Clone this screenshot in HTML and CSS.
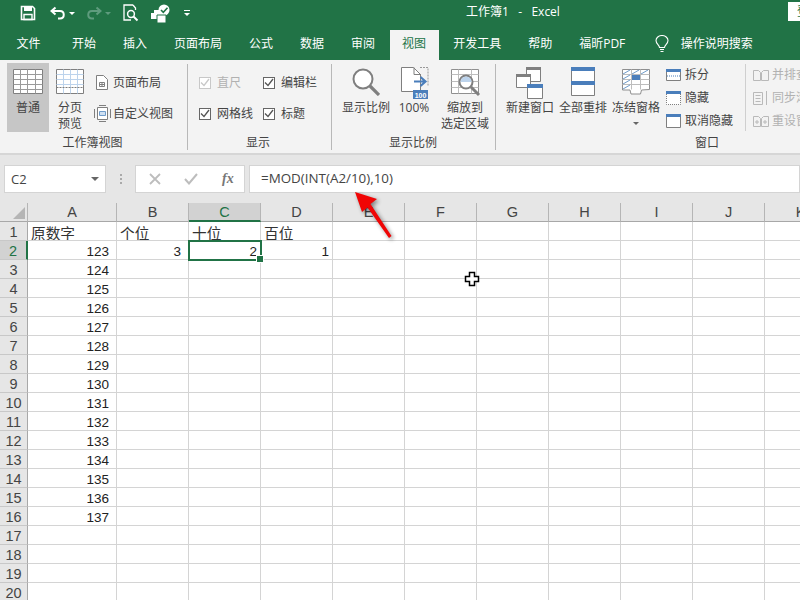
FILE: index.html
```html
<!DOCTYPE html>
<html lang="zh-CN">
<head>
    <meta charset="UTF-8">
    <title>工作簿1 - Excel</title>
    <link rel="stylesheet" href="styles.css">
</head>
<body>

    <header class="titlebar">
        <div class="qat">
            <svg class="qat-save" width="16" height="16" viewBox="0 0 16 16"><path d="M1.5 1.5h11l2 2v11h-13z" fill="none" stroke="#fff" stroke-width="1.6"/><path d="M4 1.5h8v4.5H4z" fill="#fff"/><path d="M4 9.5h8v5H4z" fill="none" stroke="#fff" stroke-width="1.4"/></svg>
            <svg class="qat-undo" width="16" height="14" viewBox="0 0 16 14"><path d="M5.5 1.5 1.5 5l4 3.5" fill="none" stroke="#fff" stroke-width="2"/><path d="M2 5h8c5 0 5 7.500 0 7.500H8" fill="none" stroke="#fff" stroke-width="2"/></svg>
            <span class="caret caret-white"></span>
            <svg class="qat-redo" width="16" height="14" viewBox="0 0 16 14"><path d="M10.500 1.500l4 3.500-4 3.500" fill="none" stroke="#5f9c7e" stroke-width="2"/><path d="M14 5H6c-5 0-5 7.500 0 7.500h2" fill="none" stroke="#5f9c7e" stroke-width="2"/></svg>
            <span class="caret caret-dim"></span>
            <svg class="qat-preview" width="16" height="18" viewBox="0 0 16 18"><path d="M10 1H1v15h7" fill="none" stroke="#fff" stroke-width="1.300"/><path d="M10 1l2.500 3v2" fill="none" stroke="#fff" stroke-width="1.300"/><circle cx="8" cy="10" r="3.400" fill="none" stroke="#fff" stroke-width="1.500"/><path d="M10.500 12.500l4 4" stroke="#fff" stroke-width="2"/></svg>
            <svg class="qat-check" width="22" height="19" viewBox="0 0 22 19"><circle cx="13" cy="6" r="5.500" fill="#fff"/><path d="M10 6l2.300 2.300L16.500 3.800" fill="none" stroke="#217346" stroke-width="1.600"/><path d="M0 9h11v6H0z" fill="#fff"/><path d="M3 6h6v3H3z" fill="#fff"/><path d="M6 11h9v8H6z" fill="#fff" stroke="#217346"/></svg>
            <span class="qat-more"><i class="caret caret-white"></i></span>
        </div>
        <div class="doc-title">工作簿1&nbsp;&nbsp; -&nbsp;&nbsp; Excel</div>
        <div class="login">登录</div>
    </header>

    <nav class="tabs">
        <span class="tab tab-first">文件</span>
        <span class="tab">开始</span>
        <span class="tab">插入</span>
        <span class="tab">页面布局</span>
        <span class="tab">公式</span>
        <span class="tab">数据</span>
        <span class="tab">审阅</span>
        <span class="tab tab-active">视图</span>
        <span class="tab">开发工具</span>
        <span class="tab">帮助</span>
        <span class="tab">福昕PDF</span>
        <span class="tab tab-search">
            <svg width="14" height="18" viewBox="0 0 14 18"><path d="M4.500 12.500C4.500 10 1 9 1 5.500a6 5 0 0 1 12 0C13 9 9.500 10 9.500 12.500z" fill="none" stroke="#fff" stroke-width="1.100"/><path d="M5 14.500h4M5.500 16.500h3" stroke="#fff" stroke-width="1.100"/></svg>
            操作说明搜索
        </span>
    </nav>

    <section class="ribbon">
        <div class="group group-views">
            <div class="group-body">
                <div class="big big-normal">
                    <div class="big-icon">
                        <svg width="30" height="25" viewBox="0 0 30 25"><path d="M.5.500h29v24H.500z" fill="#fff" stroke="#7f7f7f"/><path d="M.5 5.500h29M.5 10.500h29M.5 15.500h29M.5 20.500h29M7.500.500v24M14.500.500v24M22.500.500v24" stroke="#9a9a9a" fill="none"/></svg>
                    </div>
                    <span>普通</span>
                </div>
                <div class="big big-page">
                    <div class="big-icon">
                        <svg width="28" height="25" viewBox="0 0 28 25"><path d="M.5.500h27v24H.500z" fill="#fff" stroke="#7f7f7f"/><path d="M.5 5.500h27M.5 10.500h27M.5 15.500h27M7.500.500v24M14.500.500v24M21.500.500v24" stroke="#bcd3ec" fill="none"/><path d="M.5 18.500h27" stroke="#7f7f7f" stroke-dasharray="2 1"/></svg>
                    </div>
                    <span>分页<br>预览</span>
                </div>
                <div class="small-col small-col-2">
                    <div class="small">
                        <svg class="ico-layout" width="12" height="15" viewBox="0 0 12 15"><path d="M.5.500h7l4 4v10H.500z" fill="#fff" stroke="#7f7f7f"/><path d="M3.500 7.500h5v4h-5zM6 7.500v4M3.500 9.500h5" fill="none" stroke="#7f7f7f"/></svg>
                        页面布局
                    </div>
                    <div class="small">
                        <svg class="ico-custom" width="17" height="17" viewBox="0 0 17 17"><path d="M3.500 2.500h10v12h-10z" fill="#fff" stroke="#7f7f7f"/><path d="M5.500 6.500h6v4h-6z" fill="#cfe0f2" stroke="#6f9bc9"/><path d="M.5 4v9M16.500 4v9M5 .5h7M5 16.500h7" stroke="#7f7f7f"/></svg>
                        自定义视图
                    </div>
                </div>
            </div>
            <div class="group-label label-views">工作簿视图</div>
        </div>

        <div class="group group-show">
            <div class="group-body">
                <div class="checks">
                    <label class="check check-off"><i class="box"><svg width="10" height="9" viewBox="0 0 10 9"><path d="M1 4.500l3 3L9 1" fill="none" stroke="#c8c8c8" stroke-width="1.300"/></svg></i>直尺</label>
                    <label class="check"><i class="box"><svg width="10" height="9" viewBox="0 0 10 9"><path d="M1 4.500l3 3L9 1" fill="none" stroke="#555" stroke-width="1.300"/></svg></i>编辑栏</label>
                    <label class="check"><i class="box"><svg width="10" height="9" viewBox="0 0 10 9"><path d="M1 4.500l3 3L9 1" fill="none" stroke="#555" stroke-width="1.300"/></svg></i>网格线</label>
                    <label class="check"><i class="box"><svg width="10" height="9" viewBox="0 0 10 9"><path d="M1 4.500l3 3L9 1" fill="none" stroke="#555" stroke-width="1.300"/></svg></i>标题</label>
                </div>
            </div>
            <div class="group-label">显示</div>
        </div>

        <div class="group group-zoom">
            <div class="group-body">
                <div class="big big-zoom">
                    <div class="big-icon">
                        <svg width="28" height="28" viewBox="0 0 28 28"><circle cx="11" cy="11" r="9.500" fill="#fff" stroke="#7f7f7f" stroke-width="2"/><path d="M18 18l9 9" stroke="#7f7f7f" stroke-width="3.200"/></svg>
                    </div>
                    <span>显示比例</span>
                </div>
                <div class="big big-100">
                    <div class="big-icon">
                        <svg width="28" height="32" viewBox="0 0 28 32"><path d="M.5.500h12l7 7v17H.500z" fill="#fff" stroke="#7f7f7f"/><path d="M13 .5v7h7" fill="none" stroke="#7f7f7f"/><path d="M19 .5h8v19" fill="none" stroke="#999" stroke-dasharray="2 1"/><path d="M13 14.500h11M19.500 10l5 4.500-5 4.500" fill="none" stroke="#4a7ebb" stroke-width="2.200"/><rect x="12" y="23" width="15" height="9" fill="#4a7ebb"/><text x="19.500" y="30.500" class="ico-text">100</text></svg>
                    </div>
                    <span>100%</span>
                </div>
                <div class="big big-fit">
                    <div class="big-icon">
                        <svg width="31" height="29" viewBox="0 0 31 29"><path d="M.5.500h27v24H.500z" fill="#fff" stroke="#8f8f8f"/><path d="M.5 5.500h27M.5 12.500h27M.5 18.500h27M7.500.5v24M20.500.5v24" stroke="#bdbdbd" fill="none"/><circle cx="15" cy="13" r="6.500" fill="#fff" stroke="#7f7f7f" stroke-width="2"/><path d="M9.500 13a5.500 5.500 0 0 1 11 0z" fill="#bcd3ec"/><path d="M20 18l8 8" stroke="#7f7f7f" stroke-width="3"/></svg>
                    </div>
                    <span>缩放到<br>选定区域</span>
                </div>
            </div>
            <div class="group-label label-zoom">显示比例</div>
        </div>

        <div class="group group-window">
            <div class="group-body">
                <div class="big big-new">
                    <div class="big-icon">
                        <svg width="28" height="32" viewBox="0 0 28 32"><path d="M10.500.500h14v14h-14z" fill="#fff" stroke="#7f7f7f"/><path d="M10 0h15v3H10z" fill="#7f7f7f"/><path d="M.5 7.500h14v13H.500z" fill="#fff" stroke="#7f7f7f"/><path d="M0 7h15v3H0z" fill="#7f7f7f"/><path d="M11.500 17.500h15v14h-15z" fill="#fff" stroke="#7f7f7f"/><path d="M11 17h16v4H11z" fill="#4a7ebb"/></svg>
                    </div>
                    <span>新建窗口</span>
                </div>
                <div class="big big-all">
                    <div class="big-icon">
                        <svg width="24" height="29" viewBox="0 0 24 29"><path d="M.5.500h23v28H.500z" fill="#fff" stroke="#7f7f7f"/><path d="M0 0h24v4H0zM0 14h24v4H0z" fill="#4a7ebb"/></svg>
                    </div>
                    <span>全部重排</span>
                </div>
                <div class="big big-freeze">
                    <div class="big-icon">
                        <svg width="28" height="26" viewBox="0 0 28 26"><path d="M.5.500h27v20l-8 .5-1 4H9l-1-4H.5z" fill="#fff" stroke="#8f8f8f"/><path d="M.5 5.500h27M.5 10.500h27M.5 15.500h27M9.500.5v20M18.500.5v20" stroke="#bdbdbd" fill="none"/><path d="M1 5l7-4M1 10l7-4M1 15l7-4M1 20l7-4M10 5l7-4M19 5l7-4" stroke="#6f9bc9"/><path d="M10 6h8v5h-8z" fill="#4a7ebb"/></svg>
                    </div>
                    <span>冻结窗格</span>
                    <i class="caret caret-gray"></i>
                </div>
                <div class="small-col small-col-3">
                    <div class="small">
                        <svg width="15" height="12" viewBox="0 0 15 12"><path d="M.5.500h14v11H.500z" fill="#fff" stroke="#7f7f7f"/><path d="M0 0h15v3H0z" fill="#4a7ebb"/><path d="M1 7h13" stroke="#4a7ebb" stroke-dasharray="1 1"/></svg>
                        拆分
                    </div>
                    <div class="small">
                        <svg width="15" height="14" viewBox="0 0 15 14"><path d="M0 0h15v3H0z" fill="#4a7ebb"/><path d="M.5 3v10.500h14V3" fill="#fff" stroke="#7f7f7f" stroke-dasharray="1 1"/></svg>
                        隐藏
                    </div>
                    <div class="small">
                        <svg width="15" height="14" viewBox="0 0 15 14"><path d="M.5.500h14v13H.500z" fill="#fff" stroke="#7f7f7f"/><path d="M0 0h15v3H0z" fill="#4a7ebb"/></svg>
                        取消隐藏
                    </div>
                </div>
                <div class="small-col small-col-off">
                    <div class="small small-off">
                        <svg width="16" height="12" viewBox="0 0 16 12"><path d="M.5 1.500h5l2 2v8h-7zM15.500 1.500h-5l-2 2v8h7z" fill="none" stroke="#b9b9b9"/></svg>
                        并排查看
                    </div>
                    <div class="small small-off">
                        <svg width="16" height="16" viewBox="0 0 16 16"><path d="M.5 2.500h9v12h-9zM2.500 5.500h5M2.500 8.500h5M2.500 11.500h5M13.500 1v14" fill="none" stroke="#b9b9b9"/></svg>
                        同步滚动
                    </div>
                    <div class="small small-off">
                        <svg width="16" height="12" viewBox="0 0 16 12"><path d="M.5 1.500h5l2 2v8h-7zM15.500 1.500h-5l-2 2v8h7zM2 7h4M4 5v4M10 7h4M12 5v4" fill="none" stroke="#b9b9b9"/></svg>
                        重设窗口位置
                    </div>
                </div>
            </div>
            <div class="group-label">窗口</div>
        </div>
    </section>

    <section class="formula-area">
        <div class="namebox">C2<i class="caret caret-gray"></i></div>
        <div class="grip"></div>
        <div class="fx-buttons">
            <svg width="12" height="12" viewBox="0 0 12 12"><path d="M1 1l10 10M11 1 1 11" stroke="#bdbdbd" stroke-width="1.800"/></svg>
            <svg width="14" height="12" viewBox="0 0 14 12"><path d="M1 6l4 4.500L13 1" fill="none" stroke="#bdbdbd" stroke-width="2"/></svg>
            <span class="fx">fx</span>
        </div>
        <div class="formula-input">=MOD(INT(A2/10),10)</div>
    </section>

    <main class="sheet">
        <table class="cells">
            <thead>
                <tr><th class="corner"><i></i></th><th class="col-a">A</th><th>B</th><th class="on">C</th><th>D</th><th>E</th><th>F</th><th>G</th><th>H</th><th>I</th><th>J</th><th>K</th></tr>
            </thead>
            <tbody>
                <tr><th>1</th><td class="txt">原数字</td><td class="txt">个位</td><td class="txt">十位</td><td class="txt">百位</td><td></td><td></td><td></td><td></td><td></td><td></td><td></td></tr>
                <tr><th class="on-row">2</th><td class="num">123</td><td class="num">3</td><td class="num num-tight selected">2<i class="handle"></i></td><td class="num num-tight">1</td><td></td><td></td><td></td><td></td><td></td><td></td><td></td></tr>
                <tr><th>3</th><td class="num">124</td><td></td><td></td><td></td><td></td><td></td><td></td><td></td><td></td><td></td><td></td></tr>
                <tr><th>4</th><td class="num">125</td><td></td><td></td><td></td><td></td><td></td><td></td><td></td><td></td><td></td><td></td></tr>
                <tr><th>5</th><td class="num">126</td><td></td><td></td><td></td><td></td><td></td><td></td><td></td><td></td><td></td><td></td></tr>
                <tr><th>6</th><td class="num">127</td><td></td><td></td><td></td><td></td><td></td><td></td><td></td><td></td><td></td><td></td></tr>
                <tr><th>7</th><td class="num">128</td><td></td><td></td><td></td><td></td><td></td><td></td><td></td><td></td><td></td><td></td></tr>
                <tr><th>8</th><td class="num">129</td><td></td><td></td><td></td><td></td><td></td><td></td><td></td><td></td><td></td><td></td></tr>
                <tr><th>9</th><td class="num">130</td><td></td><td></td><td></td><td></td><td></td><td></td><td></td><td></td><td></td><td></td></tr>
                <tr><th>10</th><td class="num">131</td><td></td><td></td><td></td><td></td><td></td><td></td><td></td><td></td><td></td><td></td></tr>
                <tr><th>11</th><td class="num">132</td><td></td><td></td><td></td><td></td><td></td><td></td><td></td><td></td><td></td><td></td></tr>
                <tr><th>12</th><td class="num">133</td><td></td><td></td><td></td><td></td><td></td><td></td><td></td><td></td><td></td><td></td></tr>
                <tr><th>13</th><td class="num">134</td><td></td><td></td><td></td><td></td><td></td><td></td><td></td><td></td><td></td><td></td></tr>
                <tr><th>14</th><td class="num">135</td><td></td><td></td><td></td><td></td><td></td><td></td><td></td><td></td><td></td><td></td></tr>
                <tr><th>15</th><td class="num">136</td><td></td><td></td><td></td><td></td><td></td><td></td><td></td><td></td><td></td><td></td></tr>
                <tr><th>16</th><td class="num">137</td><td></td><td></td><td></td><td></td><td></td><td></td><td></td><td></td><td></td><td></td></tr>
                <tr><th>17</th><td></td><td></td><td></td><td></td><td></td><td></td><td></td><td></td><td></td><td></td><td></td></tr>
                <tr><th>18</th><td></td><td></td><td></td><td></td><td></td><td></td><td></td><td></td><td></td><td></td><td></td></tr>
                <tr><th>19</th><td></td><td></td><td></td><td></td><td></td><td></td><td></td><td></td><td></td><td></td><td></td></tr>
                <tr><th>20</th><td></td><td></td><td></td><td></td><td></td><td></td><td></td><td></td><td></td><td></td><td></td></tr>
            </tbody>
        </table>
    </main>

    <!-- annotation drawn over the screenshot -->
    <svg class="arrow" width="60" height="60" viewBox="0 0 60 60">
        <defs><filter id="soft" x="-30%" y="-30%" width="160%" height="160%"><feGaussianBlur stdDeviation="2"/></filter></defs>
        <path d="M5 1 12 21l5.500-4.500L39 47l2.500-2L20.500 13 27 8z" fill="#000" opacity=".45" filter="url(#soft)" transform="translate(2 2)"/>
        <path d="M5 1 12 21l5.500-4.500L39 47l2.500-2L20.500 13 27 8z" fill="#f00505"/>
    </svg>
    <svg class="cross" width="16" height="16" viewBox="0 0 16 16"><path d="M5.500 1.500h5v4h4v5h-4v4h-5v-4h-4v-5h4z" fill="#fff" stroke="#000" stroke-width="1.500"/></svg>

</body>
</html>
```

FILE: styles.css
```css
* {
    box-sizing: border-box;
}

html, body {
    margin: 0;
    padding: 0;
    width: 800px;
    height: 600px;
    overflow: hidden;
}

body {
    position: relative;
    background: #e6e6e6;
    color: #444;
    font-family: "Open Sans", "Noto Sans CJK SC", sans-serif;
    font-size: 12px;
    line-height: 16px;
}

svg {
    display: block;
    flex: none;
}

.caret {
    display: block;
    width: 0;
    height: 0;
    border-left: 3px solid transparent;
    border-right: 3px solid transparent;
    border-top: 3px solid #fff;
}

.caret-dim {
    border-top-color: #5f9c7e;
}

.caret-gray {
    border-top-color: #666;
}

/* title bar */
.titlebar {
    height: 30px;
    background: #217346;
    color: #fff;
    display: flex;
    align-items: flex-start;
    position: relative;
}

.qat {
    display: flex;
    align-items: center;
    height: 26px;
    padding-left: 20px;
}

.qat-undo { margin-left: 14px; }
.qat-redo { margin-left: 11px; }
.qat-preview { margin-left: 12px; }
.qat-check { margin-left: 12px; }
.qat-undo + .caret { margin-left: 3px; }
.qat-redo + .caret { margin-left: 3px; }

.qat-more {
    width: 6px;
    margin-left: 11px;
    border-top: 1px solid #fff;
    padding-top: 2px;
}

.doc-title {
    margin-left: 276px;
    line-height: 23px;
    width: 280px;
    flex: none;
}

.login {
    margin-left: auto;
    margin-top: 2px;
    width: 12px;
    height: 19px;
    padding-left: 9px;
    background: #fff;
    color: #217346;
    line-height: 19px;
    white-space: nowrap;
    overflow: hidden;
}

/* tabs */
.tabs {
    height: 30px;
    background: #217346;
    color: #fff;
    display: flex;
    padding-left: 3px;
}

.tab {
    padding: 0 13.500px;
    line-height: 28px;
    white-space: nowrap;
}

.tab-first {
    padding-right: 18px;
}

.tab-active {
    background: #f3f3f3;
    color: #217346;
    padding: 0 12.500px;
    margin: 0 1px;
}

.tab-search {
    display: flex;
    align-items: center;
    gap: 12px;
    padding-left: 16px;
    height: 28px;
}

/* ribbon */
.ribbon {
    height: 95px;
    background: #f3f3f3;
    border-bottom: 2px solid #d6d6d6;
    display: flex;
    padding-top: 3px;
    overflow: hidden;
}

.group {
    display: flex;
    flex-direction: column;
    position: relative;
    flex: none;
}

.group::after {
    content: "";
    position: absolute;
    right: 0;
    top: 1px;
    bottom: 3px;
    width: 1px;
    background: #b8b8b8;
}

.group-views { width: 188px; padding-left: 7px; }
.group-show { width: 144px; }
.group-zoom { width: 164px; padding-left: 10px; }
.group-window { width: 422px; padding-left: 10px; }

.group-body {
    display: flex;
    height: 70px;
}

.group-label {
    text-align: center;
    line-height: 20px;
    padding-top: 1px;
    padding-right: 10px;
}

.label-views { padding-right: 10px; }
.label-zoom { padding-right: 12px; }
.group-show .group-label { padding-right: 4px; }

.big {
    display: flex;
    flex-direction: column;
    align-items: center;
    text-align: center;
    white-space: nowrap;
    flex: none;
}

.big-icon {
    height: 37px;
    display: flex;
    justify-content: center;
}

.big-normal {
    width: 42px;
    height: 69px;
    background: #c6c6c6;
}

.big-normal .big-icon { padding-top: 6px; }
.big-page { width: 40px; margin-left: 1px; margin-right: 6px; }
.big-page .big-icon { padding-top: 6px; }

.big-zoom { width: 48px; }
.big-zoom .big-icon { padding-top: 5px; }
.big-100 { width: 40px; margin-left: 4px; }
.big-100 .big-icon { padding-top: 4px; padding-left: 2px; }
.big-fit { width: 56px; margin-left: 3px; }
.big-fit .big-icon { padding-top: 6px; padding-left: 3px; }

.big-new { width: 48px; }
.big-new .big-icon { padding-top: 4px; }
.big-all { width: 48px; margin-left: 5px; }
.big-all .big-icon { padding-top: 4px; }
.big-freeze { width: 48px; margin-left: 5px; }
.big-freeze .big-icon { padding-top: 6px; }
.big-freeze .caret { margin-top: 6px; }

.small {
    display: flex;
    align-items: center;
    white-space: nowrap;
}

.small-col {
    display: flex;
    flex-direction: column;
    flex: none;
}

.small-col-2 {
    padding: 4px 0 0 0;
}

.small-col-2 .small {
    height: 31px;
    position: relative;
    padding-left: 17px;
}

.ico-layout { position: absolute; left: 0; }
.ico-custom { position: absolute; left: -2px; }

.small-col-3 {
    margin-left: 6px;
    width: 78px;
}

.small-col-3 .small {
    height: 23px;
    gap: 4px;
}

.small-col-off {
    padding-left: 8px;
    border-left: 1px solid transparent;
    position: relative;
}

.small-col-off::before {
    content: "";
    position: absolute;
    left: 0;
    top: 1px;
    height: 67px;
    width: 1px;
    background: #cfcfcf;
}

.small-col-off .small {
    height: 23px;
    gap: 3px;
}

.checks {
    display: grid;
    grid-template-columns: 64px 70px;
    grid-auto-rows: 31px;
    padding: 4px 0 0 11px;
}

.check {
    display: flex;
    align-items: center;
    gap: 6px;
}

.check-off {
    color: #b1b1b1;
}

.box {
    width: 12px;
    height: 12px;
    background: #fff;
    border: 1px solid #666;
    display: flex;
    align-items: center;
    justify-content: center;
}

.check-off .box {
    border-color: #c8c8c8;
}

.small-off {
    color: #b1b1b1;
}

/* formula bar */
.formula-area {
    height: 48px;
    padding: 10px 0 0 4px;
    display: flex;
    align-items: flex-start;
}

.namebox {
    width: 102px;
    height: 28px;
    background: #fff;
    border: 1px solid #d4d4d4;
    padding-left: 6px;
    line-height: 26px;
    font-size: 13px;
    position: relative;
}

.namebox .caret {
    position: absolute;
    right: 6px;
    top: 11px;
    border-left-width: 4px;
    border-right-width: 4px;
    border-top-width: 4px;
}

.grip {
    width: 2px;
    height: 10px;
    margin: 9px 13px 0 14px;
    background: repeating-linear-gradient(#aaa 0 2px, transparent 2px 4px);
}

.fx-buttons {
    width: 110px;
    height: 28px;
    background: #fff;
    border: 1px solid #d4d4d4;
    display: flex;
    align-items: center;
    padding-left: 13px;
    gap: 23px;
}

.fx {
    font-family: "Liberation Serif", serif;
    font-style: italic;
    font-weight: bold;
    font-size: 14px;
    color: #777;
    margin-left: 1px;
}

.formula-input {
    flex: 1;
    height: 28px;
    margin-left: 4px;
    background: #fff;
    border: 1px solid #d4d4d4;
    padding-left: 11px;
    line-height: 24px;
    font-size: 13.400px;
}

/* sheet */
.sheet {
    height: 397px;
    background: #fff;
    overflow: hidden;
}

.cells {
    border-collapse: separate;
    border-spacing: 0;
    table-layout: fixed;
    width: 836px;
    font-family: "Liberation Sans", sans-serif;
    font-size: 13.500px;
    color: #222;
}

.cells thead th {
    width: 72px;
    height: 19px;
    background: #e6e6e6;
    border-right: 1px solid #b5b5b5;
    border-bottom: 1px solid #a8a8a8;
    font-weight: normal;
    color: #444;
    font-size: 14.500px;
    padding: 1px 0 0;
    line-height: 17px;
}

.cells thead th.corner {
    width: 28px;
    position: relative;
}

.corner i {
    position: absolute;
    right: 2px;
    bottom: 2px;
    width: 12px;
    height: 12px;
    background: #b5b5b5;
    clip-path: polygon(100% 0, 100% 100%, 0 100%);
}

.cells thead th.col-a {
    width: 89px;
}

.cells thead th.on {
    background: #d2d2d2;
    color: #217346;
    border-bottom: 2px solid #217346;
    line-height: 16px;
}

.cells tbody th {
    height: 19px;
    background: #e6e6e6;
    border-right: 1px solid #a8a8a8;
    border-bottom: 1px solid #c8c8c8;
    font-weight: normal;
    color: #444;
    font-size: 14.500px;
    padding: 3px 0 0;
    line-height: 15px;
}

.cells tbody th.on-row {
    background: #d2d2d2;
    color: #217346;
    border-right: 2px solid #217346;
}

.cells td {
    height: 19px;
    border-right: 1px solid #d4d4d4;
    border-bottom: 1px solid #d4d4d4;
    padding: 3px 3px 0;
    line-height: 15px;
    overflow: hidden;
    white-space: nowrap;
}

.cells td.txt {
    font-family: "Noto Sans CJK SC", sans-serif;
    font-size: 14.670px;
    color: #333;
}

.cells td.num {
    text-align: right;
    padding-right: 7px;
}

.cells td.num-tight {
    padding-right: 3px;
}

.cells td.selected {
    position: relative;
    overflow: visible;
    outline: 2px solid #217346;
    outline-offset: -1px;
}

.handle {
    position: absolute;
    right: -3px;
    bottom: -3px;
    width: 6px;
    height: 6px;
    background: #217346;
    border: 1px solid #fff;
    box-sizing: content-box;
    margin: -1px;
}

/* overlays */
.arrow {
    position: absolute;
    left: 350px;
    top: 191px;
}

.cross {
    position: absolute;
    left: 464px;
    top: 271px;
}

.ico-text {
    font-family: "Liberation Sans", sans-serif;
    font-size: 7px;
    font-weight: bold;
    fill: #fff;
    text-anchor: middle;
}
```
